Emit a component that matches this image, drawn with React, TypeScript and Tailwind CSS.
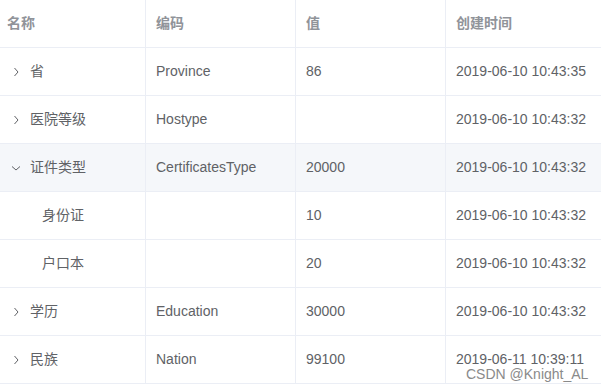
import React from 'react';

interface Row {
  name: string;
  code: string;
  value: string;
  time: string;
  level: number;
  state?: 'open' | 'closed';
  active?: boolean;
}

const rows: Row[] = [
  { name: '省', code: 'Province', value: '86', time: '2019-06-10 10:43:35', level: 0, state: 'closed' },
  { name: '医院等级', code: 'Hostype', value: '', time: '2019-06-10 10:43:32', level: 0, state: 'closed' },
  { name: '证件类型', code: 'CertificatesType', value: '20000', time: '2019-06-10 10:43:32', level: 0, state: 'open', active: true },
  { name: '身份证', code: '', value: '10', time: '2019-06-10 10:43:32', level: 1 },
  { name: '户口本', code: '', value: '20', time: '2019-06-10 10:43:32', level: 1 },
  { name: '学历', code: 'Education', value: '30000', time: '2019-06-10 10:43:32', level: 0, state: 'closed' },
  { name: '民族', code: 'Nation', value: '99100', time: '2019-06-11 10:39:11', level: 0, state: 'closed' },
];

const Chevron = ({ open }: { open: boolean }) => (
  <svg width="12" height="12" viewBox="0 0 12 12" fill="none" stroke="#606266" strokeWidth="1">
    {open ? <path d="M2 4.5 L6 8 L10 4.5" /> : <path d="M4.5 2 L8 6 L4.5 10" />}
  </svg>
);

const font = { fontFamily: '"Liberation Sans", "Noto Sans CJK SC", sans-serif' };

export default function App() {
  return (
    <div className="relative w-[601px] h-[390px] bg-white overflow-hidden text-[14px]" style={font}>
      <div className="flex h-[48px] border-b border-[#ebeef5] font-bold text-[#909399]">
        <div className="w-[146px] pl-[7px] flex items-center border-r border-[#ebeef5]">名称</div>
        <div className="w-[150px] pl-[10px] flex items-center border-r border-[#ebeef5]">编码</div>
        <div className="w-[150px] pl-[10px] flex items-center border-r border-[#ebeef5]">值</div>
        <div className="flex-1 pl-[10px] flex items-center">创建时间</div>
      </div>
      {rows.map((r) => (
        <div
          key={r.name}
          className={`flex h-[48px] border-b border-[#ebeef5] text-[#606266] ${r.active ? 'bg-[#f5f7fa]' : ''}`}
        >
          <div className="w-[146px] pl-[7px] flex items-center border-r border-[#ebeef5]">
            {r.level > 0 && <span className="w-[12px]" />}
            <span className="w-[20px] mr-[3px] flex items-center justify-start pl-[3px]">
              {r.state && <Chevron open={r.state === 'open'} />}
            </span>
            <span>{r.name}</span>
          </div>
          <div className="w-[150px] pl-[10px] flex items-center border-r border-[#ebeef5]">{r.code}</div>
          <div className="w-[150px] pl-[10px] flex items-center border-r border-[#ebeef5]">{r.value}</div>
          <div className="flex-1 pl-[10px] flex items-center">{r.time}</div>
        </div>
      ))}
      <div className="absolute left-[466px] top-[367px] text-[14px] text-[#8a8a8a] bg-white/60 leading-[14px]">
        CSDN @Knight_AL
      </div>
    </div>
  );
}
